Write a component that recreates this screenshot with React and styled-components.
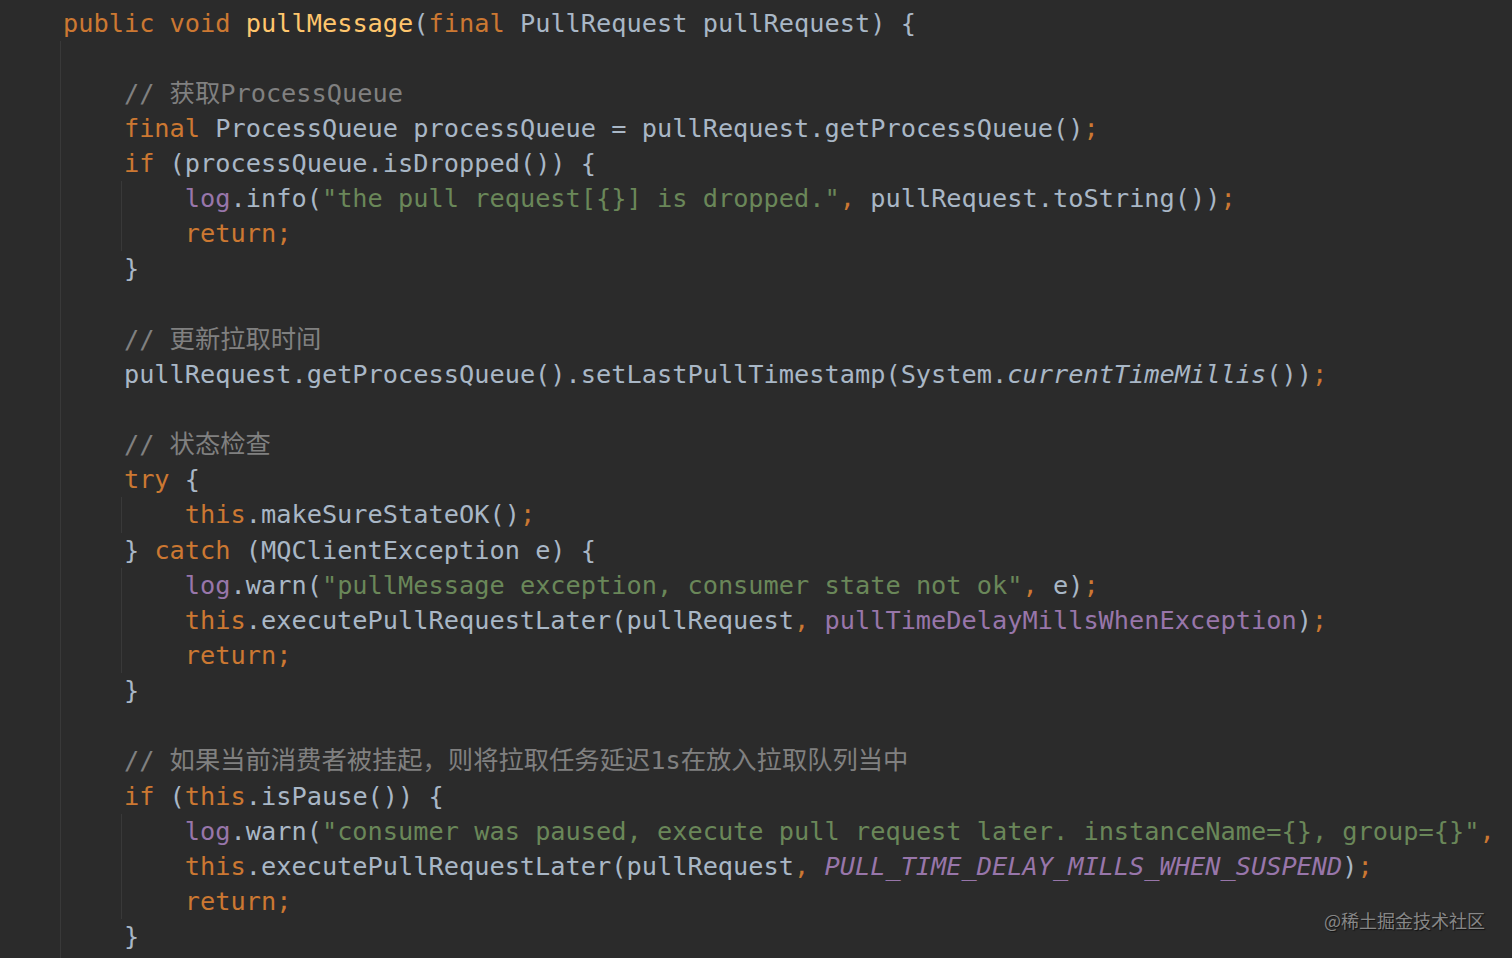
import React from 'react';
import styled, { createGlobalStyle } from 'styled-components';

const Global = createGlobalStyle`
    html, body {
        margin: 0;
        padding: 0;
        background: #2b2b2b;
        overflow: hidden;
    }
`;

const Editor = styled.div`
    position: relative;
    box-sizing: border-box;
    width: 1512px;
    height: 958px;
    overflow: hidden;
    padding: 5.5px 0 0 63px;
    background: #2b2b2b;
    color: #a9b7c6;
    font: 400 25.3px/35.15px 'DejaVu Sans Mono', 'Noto Sans CJK SC', monospace;
`;

const Line = styled.div`
    height: 35.15px;
    white-space: pre;
`;

// indent guide: the border sits 3px left of the parent column
const Block = styled.div`
    margin-left: -3px;
    padding-left: calc(4ch + 2px);
    border-left: 1px solid #393939;
`;

const Kw = styled.span`
    color: #cc7832;
`;

const Fn = styled.span`
    color: #ffc66d;
`;

const Str = styled.span`
    color: #6a8759;
`;

const Cm = styled.span`
    color: #808080;
`;

const Fld = styled.span`
    color: #9876aa;
    font-style: ${(p) => (p.$italic ? 'italic' : 'normal')};
`;

const Static = styled.span`
    font-style: italic;
`;

const Watermark = styled.div`
    position: absolute;
    right: 27px;
    bottom: 29px;
    color: #878787;
    font: 400 18px/1 'Noto Sans CJK SC', sans-serif;
    text-shadow: 1px 1px 1px rgba(0, 0, 0, 0.6);
`;

const Semi = () => <Kw>;</Kw>;
const Comma = () => <Kw>, </Kw>;

export default function App() {
    return (
        <>
            <Global />
            <Editor>
                <Line>
                    <Kw>public void </Kw><Fn>pullMessage</Fn>(<Kw>final </Kw>PullRequest pullRequest) {'{'}
                </Line>
                <Block>
                    <Line />
                    <Line><Cm>// 获取ProcessQueue</Cm></Line>
                    <Line>
                        <Kw>final </Kw>ProcessQueue processQueue = pullRequest.getProcessQueue()<Semi />
                    </Line>
                    <Line><Kw>if </Kw>(processQueue.isDropped()) {'{'}</Line>
                    <Block>
                        <Line>
                            <Fld>log</Fld>.info(<Str>"the pull request[{'{}'}] is dropped."</Str><Comma />pullRequest.toString())<Semi />
                        </Line>
                        <Line><Kw>return;</Kw></Line>
                    </Block>
                    <Line>{'}'}</Line>
                    <Line />
                    <Line><Cm>// 更新拉取时间</Cm></Line>
                    <Line>
                        pullRequest.getProcessQueue().setLastPullTimestamp(System.<Static>currentTimeMillis</Static>())<Semi />
                    </Line>
                    <Line />
                    <Line><Cm>// 状态检查</Cm></Line>
                    <Line><Kw>try </Kw>{'{'}</Line>
                    <Block>
                        <Line><Kw>this</Kw>.makeSureStateOK()<Semi /></Line>
                    </Block>
                    <Line>{'} '}<Kw>catch </Kw>(MQClientException e) {'{'}</Line>
                    <Block>
                        <Line>
                            <Fld>log</Fld>.warn(<Str>"pullMessage exception, consumer state not ok"</Str><Comma />e)<Semi />
                        </Line>
                        <Line>
                            <Kw>this</Kw>.executePullRequestLater(pullRequest<Comma /><Fld>pullTimeDelayMillsWhenException</Fld>)<Semi />
                        </Line>
                        <Line><Kw>return;</Kw></Line>
                    </Block>
                    <Line>{'}'}</Line>
                    <Line />
                    <Line><Cm>// 如果当前消费者被挂起，则将拉取任务延迟1s在放入拉取队列当中</Cm></Line>
                    <Line><Kw>if </Kw>(<Kw>this</Kw>.isPause()) {'{'}</Line>
                    <Block>
                        <Line>
                            <Fld>log</Fld>.warn(<Str>"consumer was paused, execute pull request later. instanceName={'{}'}, group={'{}'}"</Str><Kw>,</Kw>
                        </Line>
                        <Line>
                            <Kw>this</Kw>.executePullRequestLater(pullRequest<Comma /><Fld $italic>PULL_TIME_DELAY_MILLS_WHEN_SUSPEND</Fld>)<Semi />
                        </Line>
                        <Line><Kw>return;</Kw></Line>
                    </Block>
                    <Line>{'}'}</Line>
                    <Line />
                </Block>
                <Watermark>@稀土掘金技术社区</Watermark>
            </Editor>
        </>
    );
}
